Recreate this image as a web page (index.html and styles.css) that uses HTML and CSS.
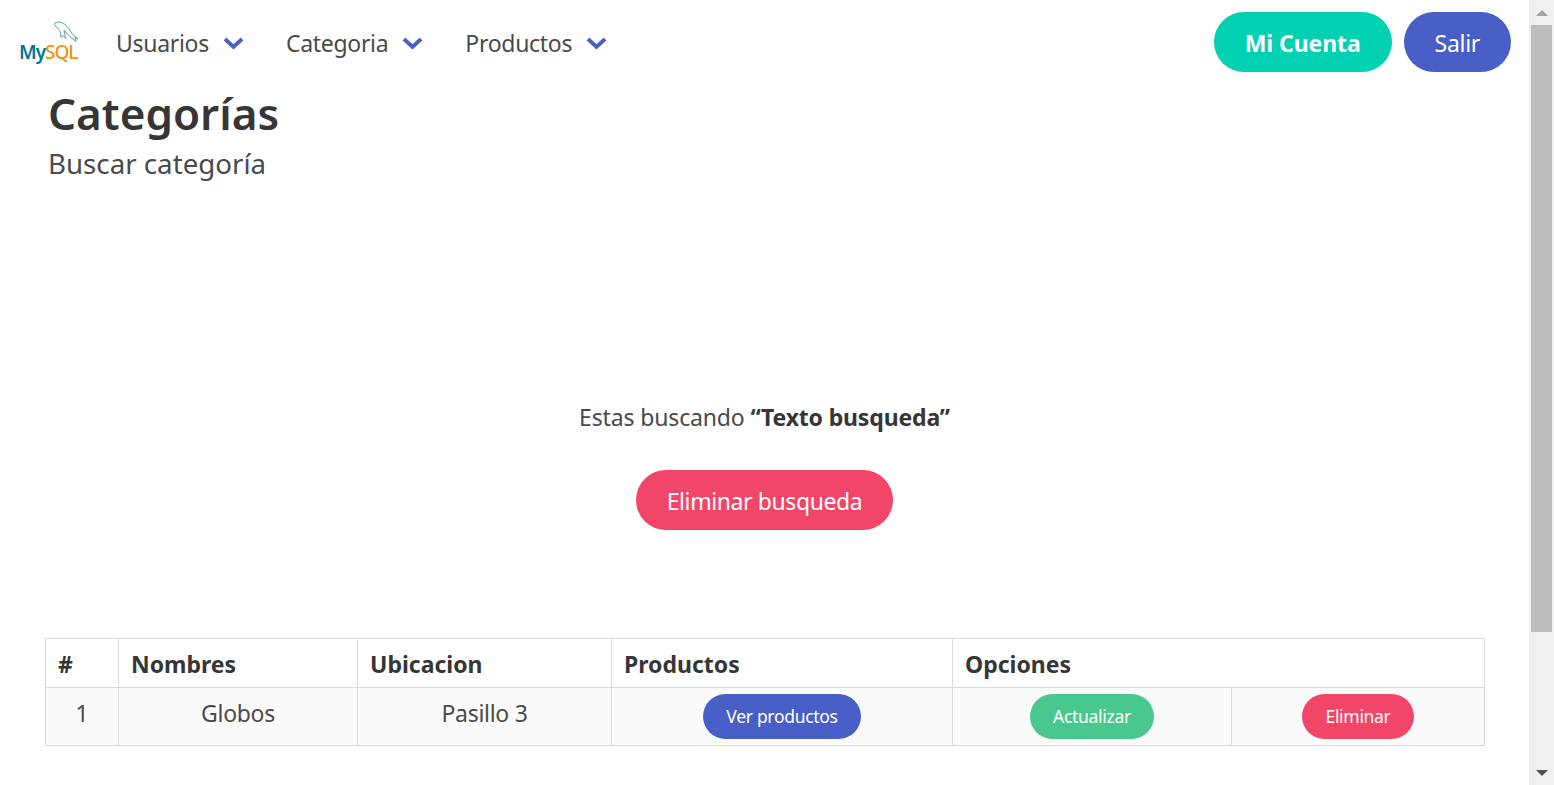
FILE: index.html
```html
<!DOCTYPE html>
<html lang="es">
<head>
  <meta charset="UTF-8">
  <title>Categorías</title>
  <link rel="stylesheet" href="styles.css">
</head>
<body>
  <div class="page">
    <nav class="navbar">
      <a class="brand" href="#">
        <svg class="logo" width="64" height="46" viewBox="0 0 64 46">
          <path class="dolphin" d="M37 5c3-1.500 7-1 10 1.500 3 2.500 5 6 7 9 1.500 2 4 3.500 6 5.500l-3-1.500 1 4-5-4c-3-2-4-5-7-7 .5 3 1 6 2 8l-3-3-2 2-.5-5c-1-3-4-5-6-8z"/>
          <text class="my" x="1" y="41">My</text>
          <text class="sql" x="27" y="41">SQL</text>
          <circle class="dot" cx="59.500" cy="40.500" r=".7"/>
        </svg>
      </a>
      <div class="nav-menu">
        <a class="nav-item" href="#">Usuarios
          <svg class="chevron" width="21" height="14" viewBox="0 0 21 14"><path d="M2 3l8.500 8 8.500-8"/></svg>
        </a>
        <a class="nav-item" href="#">Categoria
          <svg class="chevron" width="21" height="14" viewBox="0 0 21 14"><path d="M2 3l8.500 8 8.500-8"/></svg>
        </a>
        <a class="nav-item" href="#">Productos
          <svg class="chevron" width="21" height="14" viewBox="0 0 21 14"><path d="M2 3l8.500 8 8.500-8"/></svg>
        </a>
      </div>
      <div class="nav-end">
        <a class="btn btn-large btn-primary" href="#"><strong>Mi Cuenta</strong></a>
        <a class="btn btn-large btn-link btn-exit" href="#">Salir</a>
      </div>
    </nav>

    <main class="content">
      <h1 class="title">Categorías</h1>
      <h2 class="subtitle">Buscar categoría</h2>

      <div class="search-box">
        <p class="search-text">Estas buscando <strong>“Texto busqueda”</strong></p>
        <a class="btn btn-large btn-danger btn-clear" href="#">Eliminar busqueda</a>
      </div>

      <table class="table">
        <colgroup>
          <col class="col-num">
          <col class="col-name">
          <col class="col-place">
          <col class="col-products">
          <col class="col-update">
          <col class="col-delete">
        </colgroup>
        <thead>
          <tr>
            <th>#</th>
            <th>Nombres</th>
            <th>Ubicacion</th>
            <th>Productos</th>
            <th colspan="2">Opciones</th>
          </tr>
        </thead>
        <tbody>
          <tr>
            <td>1</td>
            <td>Globos</td>
            <td>Pasillo 3</td>
            <td><a class="btn btn-small btn-link" href="#">Ver productos</a></td>
            <td><a class="btn btn-small btn-success" href="#">Actualizar</a></td>
            <td><a class="btn btn-small btn-danger" href="#">Eliminar</a></td>
          </tr>
        </tbody>
      </table>
    </main>
  </div>

  <div class="scrollbar">
    <span class="arrow arrow-up"></span>
    <div class="thumb"></div>
    <span class="arrow arrow-down"></span>
  </div>
</body>
</html>
```

FILE: styles.css
```css
html, body {
  margin: 0;
  height: 785px;
  overflow: hidden;
}

body {
  display: flex;
  font-family: "Noto Sans", "Open Sans", sans-serif;
  color: #4a4a4a;
  background: white;
}

.page {
  flex: 1;
  min-width: 0;
}

/* navbar */
.navbar {
  display: flex;
  align-items: center;
  height: 88px;
  padding: 0 18px;
}

.brand {
  display: flex;
  width: 64px;
  margin-top: -6px;
}

.dolphin {
  fill: none;
  stroke: #3d8fa3;
  stroke-width: 0.9;
}

.logo text {
  font-size: 19px;
}

.my {
  fill: #00758f;
  font-weight: 600;
  letter-spacing: -0.8px;
}

.sql {
  fill: #f29111;
  font-weight: 500;
  letter-spacing: -1px;
}

.dot {
  fill: #f29111;
}

.nav-menu {
  display: flex;
  gap: 42px;
  margin-left: 34px;
  margin-top: -2px;
}

.nav-item {
  display: flex;
  align-items: center;
  gap: 14px;
  font-size: 23px;
  letter-spacing: -0.3px;
  color: #4a4a4a;
  text-decoration: none;
}

.chevron path {
  fill: none;
  stroke: #485fc7;
  stroke-width: 3.800;
}

.nav-end {
  display: flex;
  gap: 12px;
  margin-left: auto;
  margin-top: -4px;
}

/* buttons */
.btn {
  display: inline-flex;
  align-items: center;
  justify-content: center;
  box-sizing: border-box;
  color: white;
  text-decoration: none;
  border-radius: 9999px;
}

.btn-large {
  height: 60px;
  padding: 2px 31px 0;
  font-size: 23px;
}

.btn-primary strong {
  letter-spacing: -0.1px;
}

.btn-exit {
  letter-spacing: -0.3px;
}

.btn-clear {
  letter-spacing: -0.4px;
}

.btn-small {
  height: 45px;
  padding: 0 23px 2px;
  font-size: 17.500px;
  letter-spacing: -0.3px;
  vertical-align: top;
}

.btn-primary {
  background: #00d1b2;
}

.btn-link {
  background: #485fc7;
}

.btn-danger {
  background: #f14668;
}

.btn-success {
  background: #48c78e;
}

/* content */
.content {
  padding: 0 45px;
}

.title {
  margin: -2px 0 0 3px;
  font-size: 44px;
  font-weight: 600;
  line-height: 54px;
  color: #363636;
}

.subtitle {
  margin: 5px 0 0 3px;
  font-size: 27.700px;
  font-weight: 400;
  line-height: 36px;
  color: #4a4a4a;
}

.search-box {
  margin-top: 219px;
  text-align: center;
}

.search-text {
  margin: 0 0 36px;
  font-size: 23px;
  line-height: 34px;
  letter-spacing: -0.15px;
}

.search-text strong {
  color: #363636;
}

/* table */
.table {
  width: 1439px;
  margin-top: 108px;
  border-collapse: collapse;
  table-layout: fixed;
  font-size: 23px;
}

.col-num { width: 73px; }
.col-name { width: 239px; }
.col-place { width: 254px; }
.col-products { width: 341px; }
.col-update { width: 279px; }
.col-delete { width: 253px; }

.table th,
.table td {
  border: 1px solid #dbdbdb;
}

.table th {
  height: 49px;
  box-sizing: border-box;
  padding: 1px 12px 0;
  text-align: left;
  color: #363636;
  font-weight: 700;
}

.table td {
  padding: 6px 12px;
  line-height: 38px;
  letter-spacing: -0.3px;
  vertical-align: top;
  text-align: center;
  background: #fafafa;
}

/* scrollbar */
.scrollbar {
  display: flex;
  flex-direction: column;
  align-items: center;
  flex: none;
  width: 25px;
  height: 785px;
  background: #f0f0f0;
}

.thumb {
  width: 21px;
  height: 607px;
  background: #bdbdbd;
}

.arrow {
  width: 0;
  height: 0;
  border-left: 6px solid transparent;
  border-right: 6px solid transparent;
}

.arrow-up {
  margin: 10px 0 9px;
  border-bottom: 6px solid #a3a3a3;
}

.arrow-down {
  margin-top: auto;
  margin-bottom: 9px;
  border-top: 6px solid #505050;
}
```
